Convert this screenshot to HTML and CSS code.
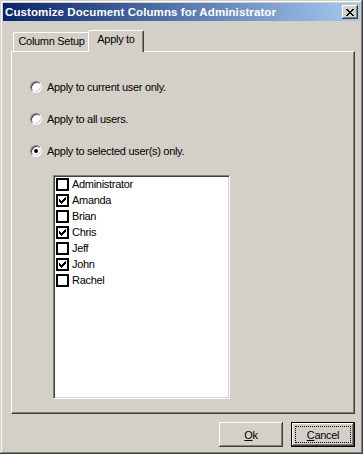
FILE: index.html
```html
<!DOCTYPE html>
<html lang="en">
  <head>
    <meta charset="UTF-8" />
    <title>Customize Document Columns for Administrator</title>
    <link rel="stylesheet" href="styles.css">
  </head>
  <body>
    <div class="window">
      <div class="titlebar">
        <span class="title">Customize Document Columns for Administrator</span>
        <span class="close">
          <svg width="8" height="7" viewBox="0 0 8 7" shape-rendering="crispEdges">
            <path d="M0 0h2v1h-2z M6 0h2v1h-2z M1 1h2v1h-2z M5 1h2v1h-2z M2 2h4v1h-4z M3 3h2v1h-2z M2 4h4v1h-4z M1 5h2v1h-2z M5 5h2v1h-2z M0 6h2v1h-2z M6 6h2v1h-2z" fill="#000"/>
          </svg>
        </span>
      </div>
      <div class="content">
        <div class="tabs">
          <div class="tab">Column Setup</div>
          <div class="tab active">Apply to</div>
        </div>
        <div class="panel">
          <div class="radio"><span class="circle"></span>Apply to current user only.</div>
          <div class="radio"><span class="circle"></span>Apply to all users.</div>
          <div class="radio"><span class="circle on"></span>Apply to selected user(s) only.</div>
          <div class="listbox">
            <div class="item"><span class="box"></span>Administrator</div>
            <div class="item"><span class="box"><svg width="9" height="9" viewBox="0 0 9 9" shape-rendering="crispEdges"><path d="M7 1h1v1h-1z M6 2h2v1h-2z M1 3h1v1h-1z M5 3h3v1h-3z M1 4h2v1h-2z M4 4h3v1h-3z M1 5h5v1h-5z M2 6h3v1h-3z M3 7h1v1h-1z"/></svg></span>Amanda</div>
            <div class="item"><span class="box"></span>Brian</div>
            <div class="item"><span class="box"><svg width="9" height="9" viewBox="0 0 9 9" shape-rendering="crispEdges"><path d="M7 1h1v1h-1z M6 2h2v1h-2z M1 3h1v1h-1z M5 3h3v1h-3z M1 4h2v1h-2z M4 4h3v1h-3z M1 5h5v1h-5z M2 6h3v1h-3z M3 7h1v1h-1z"/></svg></span>Chris</div>
            <div class="item"><span class="box"></span>Jeff</div>
            <div class="item"><span class="box"><svg width="9" height="9" viewBox="0 0 9 9" shape-rendering="crispEdges"><path d="M7 1h1v1h-1z M6 2h2v1h-2z M1 3h1v1h-1z M5 3h3v1h-3z M1 4h2v1h-2z M4 4h3v1h-3z M1 5h5v1h-5z M2 6h3v1h-3z M3 7h1v1h-1z"/></svg></span>John</div>
            <div class="item"><span class="box"></span>Rachel</div>
          </div>
        </div>
        <div class="buttons">
          <button class="btn"><u>O</u>k</button>
          <button class="btn default"><span class="focus"><u>C</u>ancel</span></button>
        </div>
      </div>
    </div>
  </body>
</html>
```
FILE: styles.css
```css
* {
  margin: 0px;
  padding: 0px;
  box-sizing: border-box;
}
body {
  background-color: #d4d0c8;
  font-family: "Liberation Sans", Arial, sans-serif;
  font-size: 11px;
  letter-spacing: -0.3px;
  color: #000;
}
.window {
  width: 363px;
  height: 454px;
  padding: 3px;
  background-color: #d4d0c8;
  box-shadow: inset -1px -1px #404040, inset 1px 1px #d4d0c8,
    inset -2px -2px #808080, inset 2px 2px #fff;
}
.titlebar {
  height: 18px;
  display: flex;
  align-items: center;
  padding-left: 2px;
  background: linear-gradient(to right, #0a246a, #a6caf0);
}
.title {
  color: #fff;
  font-weight: bold;
  font-size: 11.5px;
  letter-spacing: 0.1px;
}
.close {
  margin-left: auto;
  margin-right: 2px;
  width: 16px;
  height: 14px;
  display: flex;
  align-items: center;
  justify-content: center;
  background-color: #d4d0c8;
  box-shadow: inset -1px -1px #404040, inset 1px 1px #fff,
    inset -2px -2px #808080;
}
.content {
  padding: 9px 5px 0 8px;
}
.tabs {
  display: flex;
  align-items: flex-end;
  height: 21px;
  padding-left: 2px;
}
.tab {
  width: 77px;
  height: 19px;
  line-height: 17px;
  text-align: center;
  border-top: 1px solid #fff;
  border-left: 1px solid #fff;
  border-right: 1px solid #404040;
  border-radius: 2px 2px 0 0;
  box-shadow: inset -1px 0 #808080;
}
.tab.active {
  width: 56px;
  height: 22px;
  line-height: 17px;
  margin: 0 -2px -1px -2px;
  position: relative;
  z-index: 1;
  background-color: #d4d0c8;
}
.panel {
  height: 363px;
  padding: 27px 0 0 18px;
  border: 1px solid;
  border-color: #fff #404040 #404040 #fff;
  box-shadow: inset -1px -1px #808080;
}
.radio {
  display: flex;
  align-items: center;
  gap: 5px;
  height: 16px;
  margin-bottom: 16px;
}
.circle {
  width: 12px;
  height: 12px;
  border-radius: 50%;
  background-color: #fff;
  border: 1px solid;
  border-color: #808080 #fff #fff #808080;
  box-shadow: inset 1px 1px #404040, inset -1px -1px #d4d0c8;
  display: flex;
  align-items: center;
  justify-content: center;
}
.circle.on::after {
  content: "";
  width: 4px;
  height: 4px;
  border-radius: 50%;
  background-color: #000;
}
.listbox {
  width: 177px;
  height: 224px;
  margin-left: 23px;
  padding: 0 0 0 2px;
  background-color: #fff;
  border: 1px solid;
  border-color: #808080 #fff #fff #808080;
  box-shadow: inset 1px 1px #404040, inset -1px -1px #d4d0c8;
}
.item {
  display: flex;
  align-items: center;
  gap: 3px;
  height: 16px;
}
.box {
  width: 13px;
  height: 13px;
  border: 2px solid #000;
  background-color: #fff;
  display: flex;
}
.buttons {
  display: flex;
  justify-content: flex-end;
  gap: 8px;
  margin-top: 8px;
}
.btn {
  width: 64px;
  height: 25px;
  border: none;
  background-color: #d4d0c8;
  font: inherit;
  letter-spacing: inherit;
  color: #000;
  box-shadow: inset -1px -1px #404040, inset 1px 1px #fff,
    inset -2px -2px #808080, inset 2px 2px #d4d0c8;
}
.btn.default {
  display: flex;
  border: 1px solid #000;
}
.focus {
  flex: 1;
  margin: 3px;
  border: 1px dotted #000;
  display: flex;
  align-items: center;
  justify-content: center;
}
```
